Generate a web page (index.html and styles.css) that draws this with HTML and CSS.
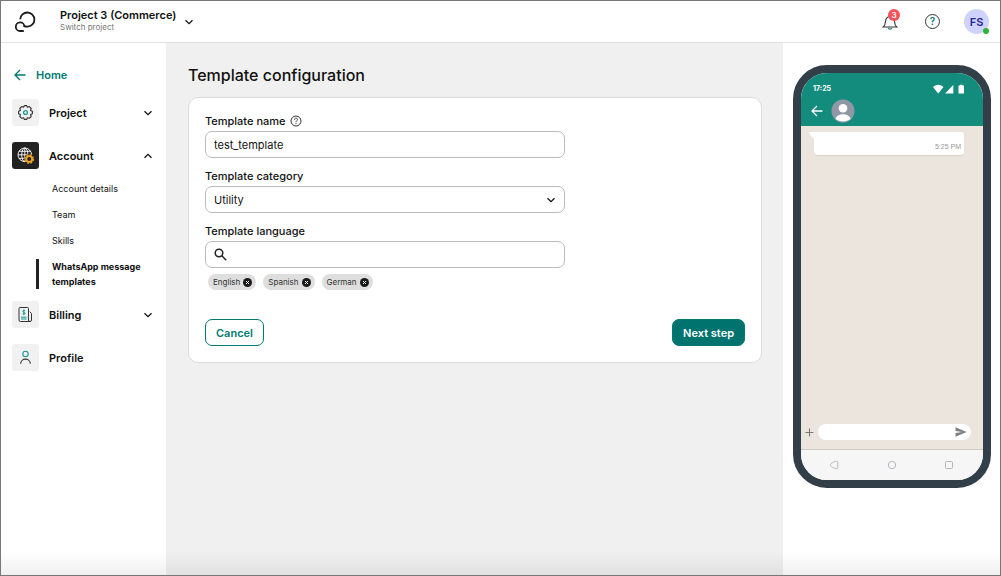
FILE: index.html
```html
<!DOCTYPE html>
<html lang="en">
<head>
    <meta charset="UTF-8">
    <meta name="viewport" content="width=device-width, initial-scale=1.0">
    <title>Template configuration</title>
    <link rel="stylesheet" href="styles.css">
</head>
<body>
    <header class="topbar">
        <a class="logo" href="#" aria-label="Dashboard">
            <svg width="22" height="22" viewBox="0 0 22 22" fill="none" stroke="#1d1d1f" stroke-width="1.8">
                <path d="M6.2 8.2A7.1 7.1 0 1 1 13.6 15.7C11.6 15.7 10.6 15.4 9.6 14.9"/>
                <path d="M10.4 15.6A4.3 4.3 0 1 0 6 20H9.8"/>
            </svg>
        </a>
        <button class="project-switch">
            <span class="project-text">
                <span class="project-name">Project 3 (Commerce)</span>
                <span class="project-hint">Switch project</span>
            </span>
            <svg class="chevron" width="10" height="10" viewBox="0 0 10 10"><path d="M1.5 3.3L5 6.7L8.5 3.3"/></svg>
        </button>
        <div class="topbar-actions">
            <button class="bell" aria-label="Notifications">
                <svg width="16" height="16" viewBox="0 0 16 16" fill="none" stroke="#333" stroke-width="1.1">
                    <path d="M1.2 13H14.8C12.9 11.6 12.7 10.2 12.5 7.5C12.3 4.6 10.6 2.7 8 2.7S3.7 4.6 3.5 7.5C3.3 10.2 3.1 11.6 1.2 13Z"/>
                    <path d="M6.3 13.8C6.6 15.6 9.4 15.6 9.7 13.8" stroke="#007a72"/>
                </svg>
                <span class="badge">3</span>
            </button>
            <button class="help" aria-label="Help">?</button>
            <button class="avatar" aria-label="User menu">FS<span class="status"></span></button>
        </div>
    </header>

    <div class="layout">
        <nav class="sidebar">
            <a class="home" href="#">
                <svg width="12" height="12" viewBox="0 0 12 12" fill="none" stroke="#007a72" stroke-width="1.3"><path d="M11.5 6H1.2M6 1L1 6L6 11"/></svg>
                Home
            </a>
            <ul class="menu">
                <li>
                    <a class="menu-link" href="#">
                        <span class="menu-icon">
                            <svg width="17" height="17" viewBox="0 0 17 17" fill="none" stroke="#333" stroke-width="1.1">
                                <path d="M7.3 1.6H9.7L10.4 3.3L12.3 2.6L14.2 4.5L13.6 6.4L15.4 7.3V9.7L13.6 10.6L14.2 12.5L12.3 14.3L10.4 13.7L9.7 15.4H7.3L6.6 13.7L4.7 14.3L2.8 12.5L3.4 10.6L1.6 9.7V7.3L3.4 6.4L2.8 4.5L4.7 2.6L6.6 3.3Z" stroke-linejoin="round"/>
                                <circle cx="8.5" cy="8.5" r="1.9" stroke="#179a96" stroke-width="1.3"/>
                            </svg>
                        </span>
                        <span class="menu-label">Project</span>
                        <svg class="chevron" width="10" height="10" viewBox="0 0 10 10"><path d="M1.5 3.3L5 6.7L8.5 3.3"/></svg>
                    </a>
                </li>
                <li>
                    <a class="menu-link" href="#">
                        <span class="menu-icon dark">
                            <svg width="17" height="17" viewBox="0 0 17 17" fill="none" stroke="#fff" stroke-width="0.9">
                                <circle cx="7.8" cy="7.8" r="6.8"/>
                                <ellipse cx="7.8" cy="7.8" rx="3.1" ry="6.8"/>
                                <path d="M1 7.8H14.6M7.8 1V14.6M2 4.3H13.6M2 11.3H13.6"/>
                                <circle cx="12.2" cy="12" r="4.9" fill="#222" stroke="none"/>
                                <circle cx="12.2" cy="12" r="4.1" stroke="#f0a422" stroke-width="1.5" stroke-dasharray="1.9 1.32"/>
                                <circle cx="12.2" cy="12" r="2.9" stroke="#f0a422" stroke-width="1.9"/>
                            </svg>
                        </span>
                        <span class="menu-label">Account</span>
                        <svg class="chevron" width="10" height="10" viewBox="0 0 10 10"><path d="M1.5 6.7L5 3.3L8.5 6.7"/></svg>
                    </a>
                    <ul class="submenu">
                        <li><a href="#">Account details</a></li>
                        <li><a href="#">Team</a></li>
                        <li><a href="#">Skills</a></li>
                        <li class="active"><a href="#">WhatsApp message templates</a></li>
                    </ul>
                </li>
                <li>
                    <a class="menu-link" href="#">
                        <span class="menu-icon">
                            <svg width="17" height="17" viewBox="0 0 17 17" fill="none" stroke="#333" stroke-width="1">
                                <path d="M13.5 15.5H3.5Q2 15.5 2 14V2.5Q2 1.5 3 1.5H10.5Q11.5 1.5 11.5 2.5V14Q11.5 15.5 13 15.5Q14.5 15.5 14.5 14V7.5L12.8 5.7"/>
                                <path d="M8.1 4.8C7.3 4.1 5.8 4.4 5.8 5.4C5.8 6.6 8 6 8 7.3C8 8.3 6.3 8.6 5.5 7.8M6.9 3.4V9.2M4 11.2H9.7M4 13H9.7" stroke="#179a96"/>
                            </svg>
                        </span>
                        <span class="menu-label">Billing</span>
                        <svg class="chevron" width="10" height="10" viewBox="0 0 10 10"><path d="M1.5 3.3L5 6.7L8.5 3.3"/></svg>
                    </a>
                </li>
                <li>
                    <a class="menu-link" href="#">
                        <span class="menu-icon">
                            <svg width="17" height="17" viewBox="0 0 17 17" fill="none" stroke-width="1.1">
                                <circle cx="8.5" cy="5" r="2.7" stroke="#179a96"/>
                                <path d="M3.7 14.8C3.7 8.6 13.3 8.6 13.3 14.8" stroke="#333"/>
                            </svg>
                        </span>
                        <span class="menu-label">Profile</span>
                    </a>
                </li>
            </ul>
        </nav>

        <main class="content">
            <h1>Template configuration</h1>
            <form class="card">
                <div class="field">
                    <div class="label-row">
                        <label for="name">Template name</label>
                        <svg width="12" height="12" viewBox="0 0 12 12" fill="none" stroke="#333">
                            <circle cx="6" cy="6" r="5"/>
                            <path d="M4.5 4.8C4.5 2.6 7.6 2.8 7.5 4.7C7.4 5.8 6 5.8 6 7.1M6 8V9"/>
                        </svg>
                    </div>
                    <input class="control" type="text" id="name" value="test_template">
                </div>
                <div class="field">
                    <label for="category">Template category</label>
                    <div class="select-wrap">
                        <select class="control" id="category">
                            <option>Utility</option>
                        </select>
                        <svg class="chevron" width="10" height="10" viewBox="0 0 10 10"><path d="M1.5 3.3L5 6.7L8.5 3.3"/></svg>
                    </div>
                </div>
                <div class="field">
                    <label for="language">Template language</label>
                    <div class="control search">
                        <svg width="13" height="13" viewBox="0 0 13 13" fill="none" stroke="#222" stroke-width="1.5">
                            <circle cx="5" cy="5" r="3.8"/>
                            <path d="M7.8 7.8L12.2 12.2"/>
                        </svg>
                        <input type="text" id="language">
                    </div>
                </div>
                <ul class="chips">
                    <li>English
                        <button type="button" aria-label="Remove English"><svg width="9" height="9" viewBox="0 0 9 9"><circle cx="4.5" cy="4.5" r="4.5"/><path d="M3 3L6 6M6 3L3 6"/></svg></button>
                    </li>
                    <li>Spanish
                        <button type="button" aria-label="Remove Spanish"><svg width="9" height="9" viewBox="0 0 9 9"><circle cx="4.5" cy="4.5" r="4.5"/><path d="M3 3L6 6M6 3L3 6"/></svg></button>
                    </li>
                    <li>German
                        <button type="button" aria-label="Remove German"><svg width="9" height="9" viewBox="0 0 9 9"><circle cx="4.5" cy="4.5" r="4.5"/><path d="M3 3L6 6M6 3L3 6"/></svg></button>
                    </li>
                </ul>
                <div class="buttons">
                    <button type="button" class="btn">Cancel</button>
                    <button type="button" class="btn primary">Next step</button>
                </div>
            </form>
        </main>

        <aside class="preview">
            <div class="phone">
                <div class="phone-header">
                    <div class="phone-status">
                        <span>17:25</span>
                        <svg width="32" height="10" viewBox="0 0 32 10" fill="#fff">
                            <path d="M0 3Q5.2 -1.4 10.5 3L5.2 9.5Z"/>
                            <path d="M12 9.5L20.3 1V9.5Z"/>
                            <path d="M25.5 1.6H27V0.8H29.5V1.6H31V9.5H25.5Z"/>
                        </svg>
                    </div>
                    <div class="phone-contact">
                        <svg width="12" height="12" viewBox="0 0 12 12" fill="none" stroke="#fff" stroke-width="1.3"><path d="M11.5 6H1.2M6 1L1 6L6 11"/></svg>
                        <svg width="24" height="24" viewBox="0 0 24 24">
                            <circle cx="12" cy="12" r="11.5" fill="#9198a5"/>
                            <circle cx="12" cy="9.3" r="4.3" fill="#fff"/>
                            <path d="M4.5 20C5.5 13.5 18.5 13.5 19.5 20C15.5 23.2 8.5 23.2 4.5 20Z" fill="#fff"/>
                        </svg>
                    </div>
                </div>
                <div class="chat">
                    <div class="message">
                        <svg width="6" height="7" viewBox="0 0 6 7"><path d="M0 0H6V7Z" fill="#fff"/></svg>
                        <div class="bubble"><time>5:25 PM</time></div>
                    </div>
                    <div class="composer">
                        <svg width="9" height="9" viewBox="0 0 9 9" stroke="#777" stroke-width="1.1"><path d="M4.5 0.5V8.5M0.5 4.5H8.5"/></svg>
                        <div class="composer-box">
                            <svg width="12" height="10" viewBox="0 0 12 10" fill="#808080"><path d="M0.5 0.3L11.7 5L0.5 9.7V6.1L7 5L0.5 3.9Z"/></svg>
                        </div>
                    </div>
                </div>
                <div class="phone-nav">
                    <svg width="10" height="10" viewBox="0 0 10 10"><path d="M7.4 1.2C8.4 1 8.8 1.8 8.8 2.6V7.4C8.8 8.2 8.4 9 7.4 8.8C5.5 8.4 1.3 6.6 1.3 5S5.5 1.6 7.4 1.2Z"/></svg>
                    <svg width="10" height="10" viewBox="0 0 10 10"><circle cx="5" cy="5" r="3.7"/></svg>
                    <svg width="10" height="10" viewBox="0 0 10 10"><rect x="1.5" y="1.5" width="7" height="7" rx="1"/></svg>
                </div>
            </div>
        </aside>
    </div>
</body>
</html>
```

FILE: styles.css
```css
* {
    box-sizing: border-box;
}

body {
    display: flex;
    flex-direction: column;
    min-height: 100vh;
    margin: 0;
    border: 1px solid #777;
    font-family: Inter, "Open Sans", sans-serif;
    font-size: 11px;
    color: #111;
    background-color: #fff;
}

/* soft fade along the bottom edge */
body::after {
    content: "";
    position: fixed;
    left: 1px;
    right: 1px;
    bottom: 1px;
    height: 24px;
    background: linear-gradient(rgba(0, 0, 0, 0), rgba(0, 0, 0, 0.06));
    pointer-events: none;
}

button, input, select {
    font-family: inherit;
    color: inherit;
}

button {
    padding: 0;
    border: none;
    background: none;
    cursor: pointer;
}

a {
    color: inherit;
    text-decoration: none;
}

ul {
    list-style: none;
    margin: 0;
    padding: 0;
}

svg {
    display: block;
    flex-shrink: 0;
}

.chevron {
    fill: none;
    stroke: #111;
    stroke-width: 1.3;
}

/* top bar */
.topbar {
    display: flex;
    align-items: center;
    height: 42px;
    padding: 0 11px 0 13px;
    border-bottom: 1px solid #e2e2e2;
}

.project-switch {
    display: flex;
    align-items: center;
    gap: 8px;
    margin-left: 24px;
    text-align: left;
}

.project-text {
    display: flex;
    flex-direction: column;
    padding-bottom: 2px;
}

.project-name {
    font-size: 11px;
    line-height: 13px;
    font-weight: 600;
}

.project-hint {
    font-size: 8px;
    line-height: 10px;
    color: #777;
}

.topbar-actions {
    display: flex;
    align-items: center;
    gap: 24px;
    margin-left: auto;
}

.bell {
    position: relative;
    margin-right: 3px;
}

.badge {
    position: absolute;
    top: -5px;
    right: -2px;
    width: 12px;
    height: 12px;
    border-radius: 50%;
    background-color: #f4515a;
    color: #fff;
    font-size: 8px;
    line-height: 12px;
    font-weight: 600;
}

.help {
    width: 15px;
    height: 15px;
    border: 1px solid #333;
    border-radius: 50%;
    color: #007a72;
    font-size: 10px;
    line-height: 13px;
    font-weight: 600;
}

.avatar {
    position: relative;
    width: 25px;
    height: 25px;
    border-radius: 50%;
    background-color: #cfd3fb;
    color: #262694;
    font-size: 11px;
    font-weight: 600;
}

.status {
    position: absolute;
    right: 0;
    bottom: 0;
    width: 6px;
    height: 6px;
    border-radius: 50%;
    background-color: #2bb534;
}

.layout {
    display: flex;
    flex: 1;
}

/* sidebar */
.sidebar {
    width: 165px;
    flex-shrink: 0;
    padding: 22px 13px 20px 11px;
}

.home {
    display: flex;
    align-items: center;
    gap: 10px;
    margin: 0 0 14px 2px;
    color: #007a72;
    line-height: 20px;
    font-weight: 600;
}

.menu {
    display: flex;
    flex-direction: column;
    gap: 16px;
}

.menu-link {
    display: flex;
    align-items: center;
    gap: 10px;
    font-weight: 600;
}

.menu-icon {
    display: grid;
    place-items: center;
    width: 27px;
    height: 27px;
    border-radius: 3px;
    background-color: #f1f1f1;
}

.menu-icon.dark {
    background-color: #222;
}

.menu-label {
    flex: 1;
}

.submenu {
    display: flex;
    flex-direction: column;
    gap: 11px;
    margin: 12px -8px -4px 24px;
    font-size: 9px;
    line-height: 15px;
}

.submenu li {
    padding-left: 13px;
    border-left: 3px solid transparent;
}

.submenu .active {
    border-color: #222;
    font-weight: 700;
}

.submenu a {
    display: block;
}

/* form */
.content {
    flex: 1;
    padding: 21px 21px 20px 22px;
    background-color: #f0f0f0;
}

h1 {
    margin: 0 0 11px;
    font-size: 16px;
    line-height: 22px;
    font-weight: 500;
}

.card {
    padding: 15px 16px 16px;
    border: 1px solid #dcdcdc;
    border-radius: 10px;
    background-color: #fff;
}

.field {
    display: flex;
    flex-direction: column;
    gap: 2px;
    max-width: 360px;
    margin-bottom: 10px;
}

.label-row {
    display: flex;
    align-items: center;
    gap: 4px;
}

label {
    font-size: 11px;
    line-height: 16px;
    font-weight: 500;
}

.control {
    width: 100%;
    height: 27px;
    padding: 0 8px;
    border: 1px solid #bbb;
    border-radius: 7px;
    background-color: #fff;
    font-size: 11px;
}

.select-wrap {
    display: grid;
    align-items: center;
}

.select-wrap > * {
    grid-area: 1 / 1;
}

.select-wrap select {
    appearance: none;
}

.select-wrap .chevron {
    justify-self: end;
    margin-right: 9px;
    pointer-events: none;
}

.search {
    display: flex;
    align-items: center;
    gap: 8px;
}

.search input {
    flex: 1;
    border: none;
    outline: none;
    font-size: 11px;
}

.chips {
    display: flex;
    gap: 7px;
    margin: -4px 0 29px 3px;
}

.chips li {
    display: flex;
    align-items: center;
    gap: 3px;
    height: 16px;
    padding: 0 4px 0 5px;
    border-radius: 8px;
    background-color: #dedede;
    color: #333;
    font-size: 8px;
}

.chips circle {
    fill: #1a1a1a;
}

.chips path {
    stroke: #fff;
}

.buttons {
    display: flex;
    justify-content: space-between;
}

.btn {
    height: 27px;
    padding: 0 10px;
    border: 1px solid #007a72;
    border-radius: 7px;
    color: #007a72;
    font-size: 11px;
    font-weight: 600;
}

.btn.primary {
    background-color: #00736e;
    color: #fff;
}

/* phone preview */
.preview {
    width: 217px;
    flex-shrink: 0;
    padding: 22px 9px 20px 10px;
}

.phone {
    display: flex;
    flex-direction: column;
    aspect-ratio: 198 / 423;
    border: 8px solid #323f48;
    border-radius: 34px;
    overflow: hidden;
}

.phone-header {
    padding: 9px 18px 3px 10px;
    background-color: #138c7e;
    color: #fff;
}

.phone-status {
    display: flex;
    justify-content: space-between;
    align-items: center;
    padding-left: 2px;
    font-size: 7px;
    line-height: 14px;
    font-weight: 700;
}

.phone-contact {
    display: flex;
    align-items: center;
    gap: 8px;
    margin-top: 3px;
}

.chat {
    display: flex;
    flex: 1;
    flex-direction: column;
    justify-content: space-between;
    padding: 6px 12px 9px 4px;
    border-bottom: 1px solid #cfcac3;
    background-color: #ece5dd;
}

.message {
    display: flex;
    padding: 0 7px 0 3px;
}

.bubble {
    display: flex;
    flex: 1;
    justify-content: flex-end;
    align-items: flex-end;
    height: 23px;
    padding: 3px;
    border-radius: 0 3px 3px 3px;
    background-color: #fff;
    box-shadow: 0 1px 1px rgba(0, 0, 0, 0.08);
    color: #999;
    font-family: "Liberation Sans", Arial, sans-serif;
    font-size: 7px;
    line-height: 10px;
}

.composer {
    display: flex;
    align-items: center;
    gap: 4px;
}

.composer-box {
    display: flex;
    flex: 1;
    justify-content: flex-end;
    align-items: center;
    height: 16px;
    padding-right: 4px;
    border-radius: 8px;
    background-color: #fff;
}

.phone-nav {
    display: flex;
    justify-content: space-between;
    align-items: center;
    height: 30px;
    padding: 0 29px 0 28px;
    background-color: #f6f6f6;
}

.phone-nav svg {
    fill: none;
    stroke: #b5b5ba;
}
```
